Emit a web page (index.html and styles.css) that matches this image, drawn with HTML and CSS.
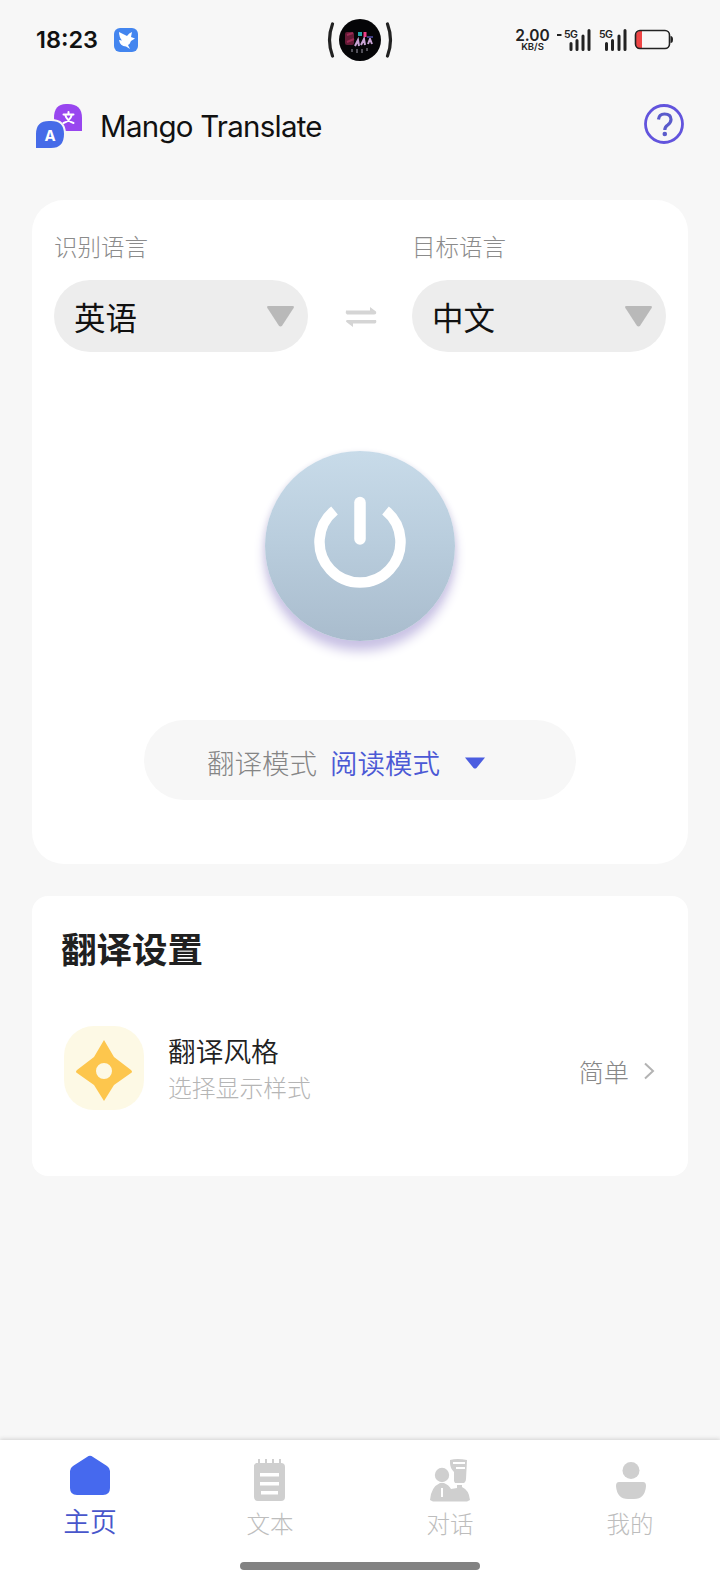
FILE: index.html
```html
<!DOCTYPE html>
<html lang="zh-CN">
<head>
<meta charset="utf-8">
<title>Mango Translate</title>
<link rel="stylesheet" href="styles.css">
</head>
<body>
<div class="screen">
  <header class="status">
    <div class="status-left">
      <span class="clock">18:23</span>
      <svg class="bird" viewBox="0 0 24 24"><rect width="24" height="24" rx="6" fill="#4385ef"/><path d="M5 4l8 4q2-3 5-4l-1 5 4 1.500-4 2.500q-1 3-3 4l2 4-4-2.500Q6 18 5 12l3 .5Q5 9 5 4z" fill="#fff"/></svg>
    </div>
    <svg class="island" viewBox="0 0 66 44" fill="none">
      <circle cx="33" cy="22" r="21" fill="#050507"/>
      <path d="M5.500 6Q-.5 22 5.500 38M60.500 6Q66.500 22 60.500 38" stroke="#222" stroke-width="3.200" stroke-linecap="round"/>
      <rect x="18" y="14" width="9" height="13" rx="2" fill="#651b36"/><path d="M20 17l6-2M20 24l7-3" stroke="#9b2b54" stroke-width="2"/>
      <path d="M28 28l3-6 1 6M34 27l3-6 1 6M41 26l2-5 2 5" stroke="#c9a4d4" stroke-width="2"/>
      <path d="M31 16h4" stroke="#25a3a8" stroke-width="4"/><path d="M38 14v5" stroke="#ef3d86" stroke-width="3"/>
      <path d="M40 19h6" stroke="#413e82" stroke-width="2"/>
      <path d="M25 34v-3M30 35v-4M35 35v-4M40 33v-3" stroke="#67646e" stroke-width="1.600"/>
    </svg>
    <div class="status-right">
      <div class="rate"><b>2.00</b><span>KB/S</span></div>
      <svg class="signal first" viewBox="0 0 36 24"><path d="M1 7h4.500" stroke="#222" stroke-width="2"/><text x="8" y="9.500">5G</text><path d="M15 15.500v6M21 12.500v9M27 8V21.500M33 2.500v19" class="bars"/></svg>
      <svg class="signal" viewBox="0 0 30 24"><text x="0" y="9.500">5G</text><path d="M7.500 15.500v6M13.500 12.500v9M20 8V21.500M26 2.500v19" class="bars"/></svg>
      <svg class="battery" viewBox="0 0 40 22"><path d="M8 2H6Q2 2 2 6v10q0 4 4 4h2z" fill="#ef4545"/><rect x="1.500" y="1.500" width="34" height="18" rx="4.500" fill="none" stroke="#222" stroke-width="1.600"/><path d="M36.500 7q2.500 0 2.500 3.500t-2.500 3.500z" fill="#222"/></svg>
    </div>
  </header>

  <div class="brand">
    <svg class="logo" viewBox="0 0 48 48">
      <path d="M31 1h2q14 0 14 14v13H32q-13 0-13-13Q19 1 31 1z" fill="#9846ef"/>
      <g stroke="#fff" stroke-width="2" fill="none" stroke-linecap="round"><path d="M28.500 11.500h10M33.500 9v2.500M37 11.500q-2 6.500-8.500 8.500M30 11.500q2 6.500 8.500 8.500"/></g>
      <path d="M14 17h2q14 0 14 14 0 15-14 15H0V31q0-14 14-14z" fill="#466be8" stroke="#f7f7f7" stroke-width="2"/>
      <text x="15" y="37.500" text-anchor="middle">A</text>
    </svg>
    <h1>Mango Translate</h1>
    <svg class="help" viewBox="0 0 42 42" fill="none"><circle cx="21" cy="21" r="18.500" stroke="#6254dd" stroke-width="2.800"/><path d="M15.500 16.500q.5-5.500 6-5.500 6.500 0 6.500 5.500 0 3-3.300 5.500-2.900 2-2.900 5" stroke="#5a5bcb" stroke-width="3.200"/><circle cx="21.800" cy="31" r="2.300" fill="#5a5bcb"/></svg>
  </div>

  <main>
    <section class="card translate">
      <div class="languages">
        <div class="language">
          <label>识别语言</label>
          <div class="select"><span>英语</span><svg viewBox="0 0 30 24"><path d="M2.500 1h25Q30 1 28.500 3.500L17 21q-2 3-4 0L1.500 3.500Q0 1 2.500 1z"/></svg></div>
        </div>
        <svg class="swap" viewBox="0 0 32 22"><path d="M1 4.500h24V1l6 4.500q1 3-2 3H2Q0 7 1 4.500zM31 14H2q-2 1 0 2.500l6 4.500v-3.500h22q2-1 1-3.500z"/></svg>
        <div class="language">
          <label>目标语言</label>
          <div class="select"><span>中文</span><svg viewBox="0 0 30 24"><path d="M2.500 1h25Q30 1 28.500 3.500L17 21q-2 3-4 0L1.500 3.500Q0 1 2.500 1z"/></svg></div>
        </div>
      </div>
      <div class="power"><svg viewBox="0 0 100 100"><path d="M24.500 19.500A40.500 40.500 0 1 0 75.500 19.500" fill="none" stroke="#fff" stroke-width="10.500"/><path d="M50 11.500v36.500" stroke="#fff" stroke-width="11.500" stroke-linecap="round"/></svg></div>
      <div class="mode"><span>翻译模式</span><strong>阅读模式</strong><svg viewBox="0 0 20 12"><path d="M0 .5h20L11.500 11q-1.500 1-3 0z"/></svg></div>
    </section>

    <section class="card settings">
      <h2>翻译设置</h2>
      <div class="setting">
        <svg class="style-icon" viewBox="0 0 84 88"><rect x="2" y="2" width="80" height="84" rx="30" fill="#fdf9e5"/><path fill-rule="evenodd" d="M42 16l10 17 17 13q2 2 0 3L52 61l-10 16-10-16-17-12q-2-1 0-3l17-13zM42 39a8 8 0 1 0 0 16 8 8 0 1 0 0-16z" fill="#fdc64d"/></svg>
        <div class="copy"><h3>翻译风格</h3><p>选择显示样式</p></div>
        <span class="value">简单</span>
        <svg class="chevron" viewBox="0 0 12 18"><path d="M2 1.500L10 9l-8 7.500" fill="none" stroke="#b3b3b3" stroke-width="2"/></svg>
      </div>
    </section>
  </main>

  <nav>
    <div class="tabs">
      <a class="tab active"><svg viewBox="0 0 44 44"><path d="M19 2q3-2.500 6 0l14 9q3 2 3 5v17q0 7-7 7H9q-7 0-7-7V16q0-3 3-5z"/></svg><span>主页</span></a>
      <a class="tab"><svg viewBox="0 0 44 44"><path fill-rule="evenodd" d="M8 5h2V1h2v4h5V1h2v4h5V1h2v4h5V1h2v4q4 0 4 4v30q0 4-4 4H10q-4 0-4-4V7zM12 15v3.500h19V15zM12 24v3.500h19V24zM13 33v3.500h17V33z"/></svg><span>文本</span></a>
      <a class="tab"><svg viewBox="0 0 44 44"><circle cx="14" cy="17" r="7.200"/><path d="M22 2q7-2 17 0l-1 19q0 5-6.500 5T26 21v-7q-4-4-4-9zM2 42q1-13 10-17h4q5 2 7 6l6-1v-4h5v3q7 3 8 13l-3 1.500H5z"/><path d="M25 5h12M28 10h9M25 26h13M14 30v9" stroke="#fff" stroke-width="2"/></svg><span>对话</span></a>
      <a class="tab"><svg viewBox="0 0 44 44"><circle cx="23" cy="12.500" r="8.500"/><path d="M11 24h24q3 0 3 4-1 13-12 13h-6Q9 41 8 28q0-4 3-4z"/></svg><span>我的</span></a>
    </div>
    <div class="indicator"></div>
  </nav>
</div>
</body>
</html>
```
FILE: styles.css
```css
* { box-sizing: border-box; }
body { margin: 0; background: #f7f7f7; font-family: "Noto Sans CJK SC", sans-serif; color: #111; }
h1, h2, h3, p { margin: 0; }
svg { display: block; flex: none; }
.screen { width: 720px; height: 1584px; display: flex; flex-direction: column; overflow: hidden; }

.status { height: 80px; display: grid; grid-template-columns: 1fr 66px 1fr; align-items: center; font-family: Inter, sans-serif; }
.status-left { display: flex; align-items: center; padding-left: 36px; }
.clock { width: 78px; font-size: 23.500px; font-weight: 600; line-height: 24px; }
.bird { width: 24px; height: 24px; }
.island { width: 66px; height: 44px; }
.status-right { display: flex; align-items: center; padding-left: 122px; }
.rate { width: 35px; text-align: center; color: #222; }
.rate b, .rate span { display: block; font-weight: 600; }
.rate b { font-size: 15.500px; line-height: 13px; }
.rate span { font-size: 9.500px; line-height: 9px; }
.signal { width: 30px; height: 24px; margin-left: 7px; }
.signal.first { width: 36px; margin-left: 6px; }
.signal text { font: 600 10.500px Inter, sans-serif; letter-spacing: -.5px; fill: #222; }
.bars { stroke: #222; stroke-width: 3; stroke-linecap: round; fill: none; }
.battery { width: 40px; height: 22px; margin-left: 5px; }

.brand { height: 120px; display: flex; align-items: flex-start; padding: 22px 35px 0 36px; }
.logo { width: 48px; height: 48px; margin: 1px 1px 0 -1px; }
.logo text { font: 700 15px Inter, sans-serif; fill: #fff; }
.brand h1 { flex: 1; margin-left: 16px; font: 400 29.500px/48px Inter, sans-serif; letter-spacing: -.75px; }
.help { width: 42px; height: 42px; margin-top: 1px; }

main { flex: 1; display: flex; flex-direction: column; gap: 32px; padding: 0 32px; }
.card { background: #fff; }
.translate { height: 664px; border-radius: 32px; display: flex; flex-direction: column; align-items: center; padding-top: 32px; }
.languages { width: 612px; display: flex; justify-content: space-between; align-items: flex-end; }
.language { width: 254px; }
.language label { display: block; height: 48px; padding-left: 0; font-size: 23.500px; line-height: 29px; font-weight: 300; color: #8b8b8b; }
.select { height: 72px; border-radius: 36px; background: #ededed; display: flex; align-items: center; justify-content: space-between; padding: 0 13px 0 20px; font-size: 31.500px; line-height: 40px; }
.select svg { width: 29px; height: 23px; fill: #b9b9b9; }
.swap { width: 32px; height: 22px; margin: 0 -1px 24px 1px; fill: #d5d5d5; }
.power { width: 190px; height: 190px; margin-top: 99px; border-radius: 50%; display: flex; justify-content: center; padding-top: 40px; background: linear-gradient(#c8dbe9, #b9cddd 48%, #a9bccd); box-shadow: 0 10px 12px #c9c2e5, 0 2px 6px #dedee8; }
.power svg { width: 100px; height: 100px; }
.mode { width: 432px; height: 80px; margin-top: 79px; border-radius: 40px; background: #f7f7f7; display: flex; align-items: center; padding: 4px 0 0 63px; font-size: 27.500px; line-height: 36px; font-weight: 300; color: #858585; }
.mode strong { margin-left: 13px; font-weight: 350; color: #4b59d5; }
.mode svg { width: 20px; height: 12px; margin: 1px 0 0 25px; fill: #4b5de0; }

.settings { height: 280px; border-radius: 16px; padding: 28px 33px 0 29px; }
.settings h2 { font-size: 35.500px; line-height: 48px; font-weight: 700; color: #202020; }
.setting { height: 88px; margin-top: 52px; display: flex; align-items: center; }
.style-icon { width: 84px; height: 88px; margin-left: 1px; }
.copy { flex: 1; margin-left: 22px; }
.copy h3 { font-size: 27.700px; line-height: 38px; font-weight: 350; color: #222; }
.copy p { font-size: 23.800px; line-height: 36px; font-weight: 300; color: #b5b5b5; }
.value { margin-top: 5px; font-size: 25.200px; line-height: 34px; font-weight: 300; color: #888; }
.chevron { width: 12px; height: 18px; margin: 5px 0 0 14px; }

nav { height: 144px; background: #fff; box-shadow: 0 -1px 4px #d2d2d2; }
.tabs { height: 122px; display: grid; grid-template-columns: repeat(4, 1fr); padding-top: 16px; }
.tab { display: flex; flex-direction: column; align-items: center; color: #bdbdbd; font-size: 23.500px; line-height: 34px; font-weight: 300; }
.tab svg { width: 44px; height: 44px; margin-top: 2px; fill: #cfcfcf; }
.tab span { margin-top: 4px; }
.tab.active { color: #4856cb; font-size: 26.800px; font-weight: 350; }
.tab.active svg { margin-top: -1px; fill: #4669ee; }
.tab.active span { margin-top: 5px; }
.indicator { width: 240px; height: 8px; margin: 0 auto; border-radius: 4px; background: #828282; }
```
